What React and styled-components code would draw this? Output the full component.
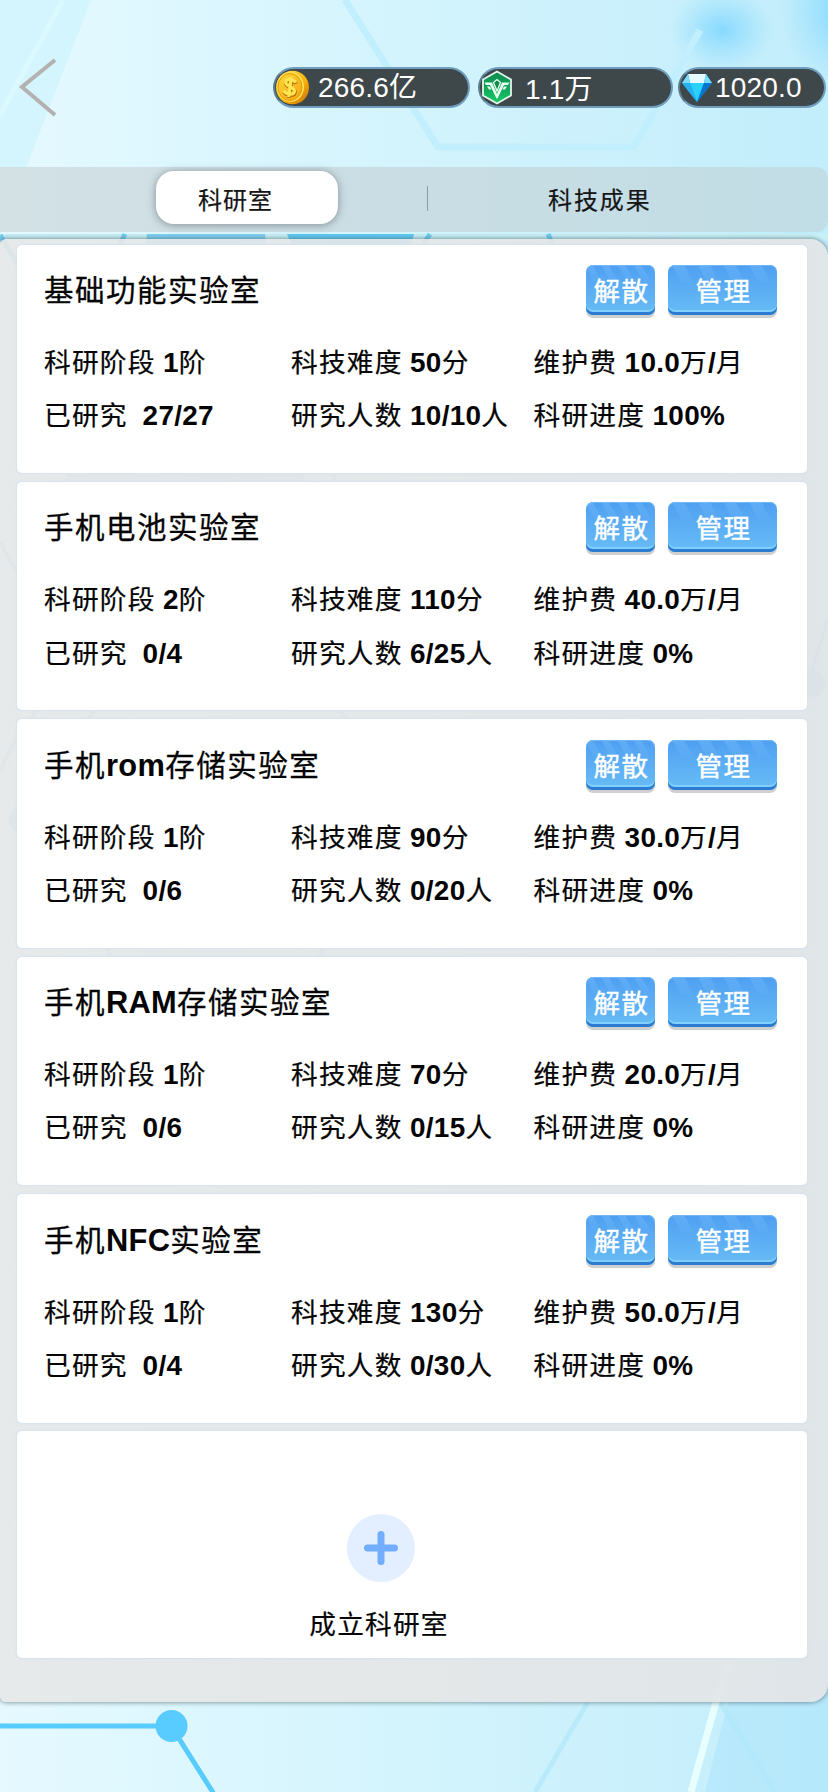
import React from "react";
import styled, { createGlobalStyle } from "styled-components";

const Global = createGlobalStyle`
  * { box-sizing: border-box; }
  body { margin: 0; font-family: "Liberation Sans", "Noto Sans CJK SC", sans-serif; color: #050505; }
`;

const Screen = styled.main`
  position: relative;
  width: 828px;
  height: 1792px;
  overflow: hidden;
  display: flex;
  flex-direction: column;
  isolation: isolate;
`;

const Backdrop = styled.svg`
  position: absolute;
  inset: 0;
  z-index: -1;
`;

const Header = styled.header`
  height: 167px;
  padding: 58px 2px 0 19px;
  display: flex;
  align-items: flex-start;
`;

const Back = styled.button`
  border: 0;
  padding: 0;
  background: none;
  line-height: 0;
  margin-right: auto;
`;

const Purse = styled.div`
  display: flex;
  margin-top: 9px;
`;

const Pill = styled.div`
  width: ${(p) => p.$w}px;
  height: 41px;
  margin-left: ${(p) => p.$gap || 0}px;
  padding-left: ${(p) => p.$pad}px;
  display: flex;
  align-items: center;
  border: 2px solid #6f9dbd;
  border-left-color: #5d7f92;
  border-radius: 21px;
  background: #3e484b;
  color: #fff;
  font-size: 28px;
  letter-spacing: 0.2px;
  white-space: nowrap;
`;

const Amount = styled.span`
  line-height: 36px;
  margin-left: ${(p) => p.$left}px;
  margin-top: ${(p) => p.$top}px;
`;

const Tabs = styled.nav`
  height: 65px;
  display: flex;
  align-items: center;
  padding-left: 156px;
  border-radius: 0 12px 12px 0;
  background: linear-gradient(90deg, #d3e1e5, #c9dde4 50%, #c1dde5);
`;

const Tab = styled.button`
  width: ${(p) => p.$w}px;
  height: 53px;
  margin-top: -4px;
  padding: 1px 0 0 ${(p) => p.$pad}px;
  border: 0;
  border-radius: 18px;
  background: ${(p) => (p.$active ? "#fff" : "transparent")};
  box-shadow: ${(p) => (p.$active ? "0 1px 8px rgba(90,100,105,.65)" : "none")};
  font: 24px "Liberation Sans", "Noto Sans CJK SC", sans-serif;
  letter-spacing: ${(p) => p.$track}px;
  color: #151515;
  text-align: left;
  -webkit-text-stroke: 0.2px currentColor;
`;

const Divider = styled.i`
  width: 1px;
  height: 25px;
  margin-left: 89px;
  margin-top: -3px;
  background: #8e9ca1;
`;

const Panel = styled.section`
  height: 1463px;
  margin-top: 7px;
  padding: 5.5px 21px 0 17px;
  display: flex;
  flex-direction: column;
  gap: 8.9px;
  border-radius: 6px 18px 18px 6px;
  background: linear-gradient(90deg, rgba(231,232,231,.9), rgba(227,229,231,.92));
  box-shadow: 0 0 4px 1px rgba(60,85,95,.55);
`;

const Card = styled.article`
  height: 228.5px;
  flex: none;
  padding: 20.5px 30px 0 27px;
  border-radius: 5px;
  background: #fff;
  box-shadow: 0 0 2px 1px #d5e2ee;
`;

const CardHead = styled.div`
  display: flex;
  height: 53px;
  gap: 13px;
`;

const Strong = styled.b`
  font-weight: 700;
  font-size: 1.045em;
  letter-spacing: 0.3px;
  word-spacing: -0.6px;
  -webkit-text-stroke: 0;
`;

const Title = styled.h2`
  margin: 4px auto 0 0;
  font-size: 29.5px;
  line-height: 44px;
  font-weight: 400;
  letter-spacing: 1.5px;
  -webkit-text-stroke: 0.3px currentColor;
`;

const Action = styled.button`
  position: relative;
  isolation: isolate;
  overflow: hidden;
  width: ${(p) => p.$w}px;
  height: 50px;
  padding: 4px 0 0 2px;
  border: 0;
  border-radius: 7px;
  color: #fff;
  font: 26.5px/44px "Liberation Sans", "Noto Sans CJK SC", sans-serif;
  letter-spacing: 1.4px;
  text-align: center;
  white-space: nowrap;
  -webkit-text-stroke: 0.4px currentColor;
  background: linear-gradient(#4f9ff2, #68bdf5);
  box-shadow: inset 0 -3px #2b7bd0, inset 0 -5px #80d0fb, inset 0 1px #6fb8f5;

  &::before {
    content: "";
    position: absolute;
    z-index: -1;
    inset: 1px 0 auto;
    height: 17px;
    background: repeating-linear-gradient(
      62deg,
      transparent 0 ${(p) => p.$w / 9}px,
      rgba(135, 200, 255, 0.3) ${(p) => p.$w / 9}px ${(p) => p.$w / 4.8}px
    );
    mask-image: linear-gradient(#000, rgba(0, 0, 0, 0.2));
  }
`;

const ButtonBase = styled.span`
  height: 53px;
  display: block;
  border-radius: 7px;
  background: linear-gradient(transparent 60%, #cfcfd1 60%);
`;

const Stats = styled.dl`
  margin: 25px 0 0;
  display: grid;
  grid-template-columns: 247px 242.5px 1fr;
  grid-auto-rows: 53.3px;
`;

const Stat = styled.div`
  font-size: 26.7px;
  line-height: 40px;
  letter-spacing: 1.2px;
  white-space: pre;
  -webkit-text-stroke: 0.2px currentColor;
`;

const AddCard = styled(Card)`
  height: 227px;
  display: flex;
  flex-direction: column;
  align-items: center;
  padding: 83px 63px 0 0;
  font-size: 26.7px;
  line-height: 40px;
  letter-spacing: 1.2px;
  -webkit-text-stroke: 0.2px currentColor;
`;

const AddLabel = styled.span`
  margin: 23px 3px 0 0;
`;

const Mixed = ({ children }) =>
  children.split(/([ -~]+)/).map((s, i) => (i % 2 ? <Strong key={i}>{s}</Strong> : s));

const CardButton = ({ width, children }) => (
  <ButtonBase>
    <Action $w={width}>{children}</Action>
  </ButtonBase>
);

const labs = [
  ["基础功能实验室", "1", "50", "10.0", "27/27", "10/10", "100%"],
  ["手机电池实验室", "2", "110", "40.0", "0/4", "6/25", "0%"],
  ["手机rom存储实验室", "1", "90", "30.0", "0/6", "0/20", "0%"],
  ["手机RAM存储实验室", "1", "70", "20.0", "0/6", "0/15", "0%"],
  ["手机NFC实验室", "1", "130", "50.0", "0/4", "0/30", "0%"],
];

const Coin = () => (
  <svg width="35" height="35" viewBox="0 0 35 35">
    <defs>
      <linearGradient id="gold" x1="0" y1="0" x2="1" y2="1">
        <stop offset="0" stopColor="#ffe765" />
        <stop offset=".55" stopColor="#fbb80f" />
        <stop offset="1" stopColor="#c66a02" />
      </linearGradient>
      <linearGradient id="face" x1="0" y1="0" x2="1" y2="1">
        <stop offset="0" stopColor="#ffd93a" />
        <stop offset="1" stopColor="#f3a312" />
      </linearGradient>
    </defs>
    <ellipse cx="17.500" cy="17.500" rx="16.500" ry="16.800" fill="url(#gold)" />
    <ellipse cx="15.500" cy="17" rx="13.500" ry="15" fill="#ffe24e" />
    <ellipse cx="15" cy="17" rx="12" ry="13.500" fill="url(#face)" stroke="#e49a0a" />
    <g transform="rotate(8 15 17)" fill="none">
      <path d="M20.500 13C18.500 9.500 10.500 9.500 10.500 14C10.500 18 20.500 17 20.500 21.500C20.500 26 12 26 10 22.500M15.500 8V28" stroke="#bb7206" strokeWidth="4" />
      <path d="M20 12C18 8.500 10 8.500 10 13C10 17 20 16 20 20.500C20 25 11.500 25 9.500 21.500M15 7V27" stroke="#ffe552" strokeWidth="3.200" />
    </g>
  </svg>
);

const Emblem = () => (
  <svg width="32" height="35" viewBox="0 0 32 35">
    <defs>
      <linearGradient id="jade" x1="0" y1="0" x2="0" y2="1">
        <stop offset="0" stopColor="#108a50" />
        <stop offset=".6" stopColor="#11ad5c" />
        <stop offset="1" stopColor="#1ccb66" />
      </linearGradient>
    </defs>
    <path d="M16 1.500L30 9.500V25.500L16 33.500L2 25.500V9.500Z" fill="url(#jade)" stroke="#e3f5ec" strokeWidth="1.800" strokeLinejoin="round" />
    <path d="M3.500 12.500H11L16 24L21 12.500H28.500L27 15H23L16.500 28.500H15.500L9 15H5ZM6 16.500H9L10.500 19.500H8ZM26 16.500H23L21.500 19.500H24Z" fill="#e9fff2" />
    <path d="M12.500 12.500L16 9.500L19.500 12.500L16 21Z" fill="#128a49" stroke="#e9fff2" strokeWidth="1.300" />
  </svg>
);

const Gem = () => (
  <svg width="32" height="30" viewBox="0 0 32 30">
    <path d="M7 1H25L31 10L16 29L1 10Z" fill="#119be9" />
    <path d="M7 1H25L23 10H9Z" fill="#e5fbff" />
    <path d="M7 1L1 10H9ZM25 1L31 10H23Z" fill="#7bdcff" />
    <path d="M9 10H23L16 29Z" fill="#29d1fb" />
    <path d="M1 10H9L16 29Z" fill="#27b0f3" />
    <path d="M23 10H31L16 29Z" fill="#0876cf" />
  </svg>
);

const Background = () => (
  <Backdrop width="828" height="1792" viewBox="0 0 828 1792">
    <defs>
      <linearGradient id="sky" x1="0" y1="0" x2="1" y2="0">
        <stop offset="0" stopColor="#e5f9ff" />
        <stop offset=".5" stopColor="#d3f4fd" />
        <stop offset="1" stopColor="#c2edfb" />
      </linearGradient>
      <radialGradient id="glow">
        <stop offset="0" stopColor="#7bd5ff" stopOpacity=".85" />
        <stop offset="1" stopColor="#8bdcff" stopOpacity="0" />
      </radialGradient>
    </defs>
    <path d="M0 0H828V1792H0Z" fill="url(#sky)" />
    <path d="M0 0H91L0 235Z" fill="#cdf3fd" opacity=".7" />
    <path d="M63 0L0 115" stroke="#dafaff" strokeWidth="5" />
    <ellipse cx="722" cy="30" rx="52" ry="42" fill="url(#glow)" />
    <ellipse cx="842" cy="10" rx="62" ry="75" fill="url(#glow)" />
    <path d="M345 0L438 147H634L700 30" fill="none" stroke="#c2effd" strokeWidth="7" />
    <path d="M0 234H828V240H0Z" fill="#c9f0f7" />
    <path d="M147 234H265L271 290H140Z" fill="#7fd0ef" />
    <path d="M287 234H414L400 290H310Z" fill="#60cbf4" />
    <path d="M125 234L110 265M430 234L410 265M548 234L562 265M0 235L18 265" stroke="#70cdf1" strokeWidth="5" />
    <path d="M70 470H298L320 495H55Z" fill="#90c9e6" opacity=".6" />
    <path d="M330 470L345 495M0 542L18 575M0 770L18 735M38 705L20 745M98 705L85 725M335 705L350 725M105 945L115 965M325 945L315 965" stroke="#7cc6e5" strokeWidth="4" opacity=".6" />
    <circle cx="811" cy="683" r="14" fill="#89cbed" />
    <path d="M811 672L828 620" stroke="#89cbed" strokeWidth="3" />
    <circle cx="23" cy="820" r="14" fill="#89cbed" />
    <path d="M705 1792L728 1702L800 1640H828V1792Z" fill="#a9e4fb" opacity=".5" />
    <path d="M588 1702L535 1792M720 1702L775 1792" stroke="#b0e8fb" strokeWidth="5" opacity=".7" />
    <path d="M730 1660L716 1702L691 1792" fill="none" stroke="#e8ffff" strokeWidth="7" />
    <path d="M0 1726H171L214 1794" fill="none" stroke="#58cbff" strokeWidth="5" />
    <circle cx="171.500" cy="1726" r="16" fill="#58cbff" />
  </Backdrop>
);

export default function App() {
  return (
    <Screen>
      <Global />
      <Background />
      <Header>
        <Back>
          <svg width="40" height="60" viewBox="0 0 40 60">
            <path d="M36 2L3 29L36 57" fill="none" stroke="#b4b1b1" strokeWidth="4" />
          </svg>
        </Back>
        <Purse>
          <Pill $w={197} $pad={0}><Coin /><Amount $left={8} $top={0}>266.6亿</Amount></Pill>
          <Pill $w={195} $gap={8} $pad={1}><Emblem /><Amount $left={12} $top={4}>1.1万</Amount></Pill>
          <Pill $w={148} $gap={5} $pad={1}><Gem /><Amount $left={2} $top={0}>1020.0</Amount></Pill>
        </Purse>
      </Header>
      <Tabs>
        <Tab $active $w={182} $pad={42} $track={1}>科研室</Tab>
        <Divider />
        <Tab $w={260} $pad={120} $track={1.9}>科技成果</Tab>
      </Tabs>
      <Panel>
        {labs.map(([name, stage, difficulty, cost, done, people, progress]) => (
          <Card key={name}>
            <CardHead>
              <Title><Mixed>{name}</Mixed></Title>
              <CardButton width={69}>解散</CardButton>
              <CardButton width={109}>管理</CardButton>
            </CardHead>
            <Stats>
              <Stat><Mixed>{`科研阶段 ${stage}阶`}</Mixed></Stat>
              <Stat><Mixed>{`科技难度 ${difficulty}分`}</Mixed></Stat>
              <Stat><Mixed>{`维护费 ${cost}万/月`}</Mixed></Stat>
              <Stat><Mixed>{`已研究  ${done}`}</Mixed></Stat>
              <Stat><Mixed>{`研究人数 ${people}人`}</Mixed></Stat>
              <Stat><Mixed>{`科研进度 ${progress}`}</Mixed></Stat>
            </Stats>
          </Card>
        ))}
        <AddCard>
          <svg width="68" height="68" viewBox="0 0 68 68">
            <circle cx="34" cy="34" r="34" fill="#e3efff" />
            <path d="M34 20.500V47.500M20.500 34H47.500" stroke="#73adff" strokeWidth="7" strokeLinecap="round" />
          </svg>
          <AddLabel>成立科研室</AddLabel>
        </AddCard>
      </Panel>
    </Screen>
  );
}
